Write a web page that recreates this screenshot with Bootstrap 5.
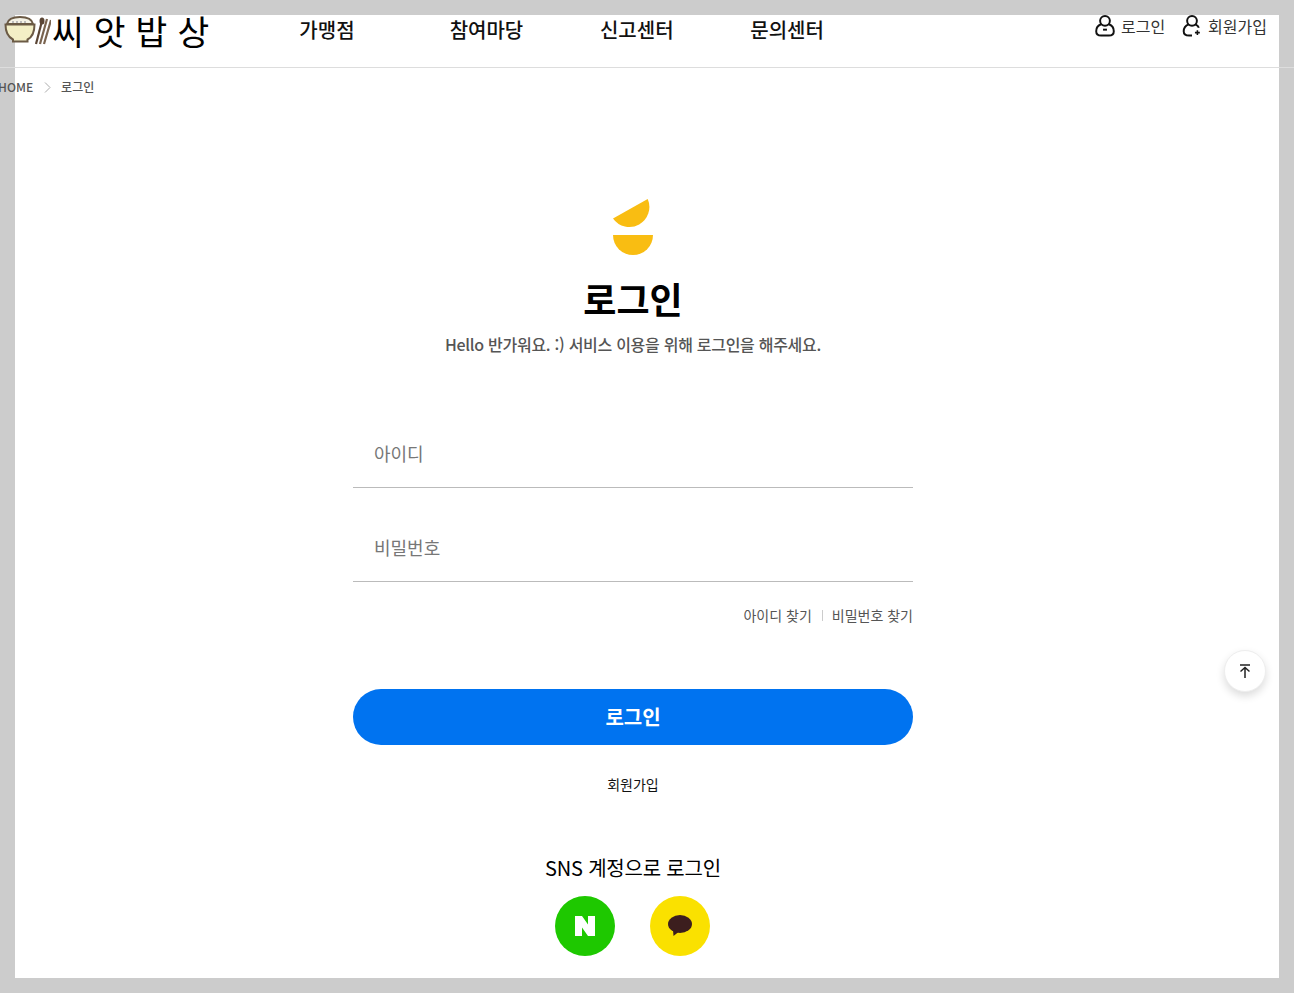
<!DOCTYPE html>
<html lang="ko">
<head>
<meta charset="utf-8">
<title>로그인</title>
<link href="https://cdn.jsdelivr.net/npm/bootstrap@5.3.0/dist/css/bootstrap.min.css" rel="stylesheet">
<style>
html,body{height:100%}
body{background:#ccc;font-family:"Noto Sans CJK KR","Noto Sans",sans-serif;overflow:hidden;color:#000}
.panel-sheet{margin:15px;height:963px;background:#fff;position:relative}
.site-head{margin:0 -15px;height:53px;border-bottom:1px solid #ddd;padding-left:4px;padding-right:27px}
.brand-name{font-size:34.500px;line-height:30px;letter-spacing:.2px;color:#000;text-decoration:none;white-space:nowrap;margin-left:1px;font-weight:400}
.brand-mark{width:47px;height:32px;flex:none}
.main-nav{margin-left:90px}
.main-nav a{display:block;width:150.300px;font-size:20px;font-weight:500;color:#111;text-decoration:none;line-height:30px;white-space:nowrap}
.user-link{font-size:16px;color:#333;text-decoration:none;line-height:22px;column-gap:5px}
.user-links{column-gap:17px}
.crumbs{margin:0 0 0 -16px;height:39px;font-size:12px;font-weight:500;color:#555;padding-bottom:1px}
.crumbs .sep{margin:0 10px 0 11px;color:#aaa}
.crumbs .home-txt{margin-left:-1px}
.login-zone{margin:0 13px 0 -15px;padding-top:92px;text-align:center}
.login-box{width:560px;margin:0 auto}
.login-title{font-size:36px;font-weight:700;line-height:52px;margin:16px 0 0;color:#000}
.login-sub{font-size:16px;font-weight:500;color:#555;line-height:24px;margin:8px 0 64px;letter-spacing:-.28px}
.line-input{display:block;width:100%;height:68px;border:0;border-bottom:1px solid #bbb;padding:0 21px 2px;font-size:18px;outline:0;margin-bottom:26px;background:transparent}
.line-input::placeholder{color:#777;opacity:1}
.find-links{font-size:14px;color:#555;line-height:20px;margin-top:-3px}
.find-links a{color:#555;text-decoration:none}
.find-links i{display:inline-block;width:1px;height:11px;background:#ccc;margin:0 9px 0 10px}
.btn-login{display:block;width:100%;height:56px;border-radius:28px;background:#0073f0;border:0;color:#fff;font-size:20px;font-weight:700;margin-top:64px}
.join-link{display:block;font-size:14px;line-height:20px;margin-top:29px;color:#111;text-decoration:none}
.sns-title{font-size:20px;line-height:30px;margin:59px 0 13px;color:#000;font-weight:400;letter-spacing:-.2px}
.sns-row{column-gap:35px;padding-right:2px}
.sns-round{width:60px;height:60px;border-radius:50%}
.sns-naver{background:#1ec800}
.sns-kakao{background:#fae100}
.to-top{position:absolute;left:1209px;top:635px;width:42px;height:42px;border-radius:50%;background:#fff;border:1px solid #eee;box-shadow:0 4px 8px rgba(0,0,0,.14);padding:0}
</style>
</head>
<body>
<div class="panel-sheet">
  <header class="site-head d-flex align-items-start">
    <svg class="brand-mark" viewBox="0 0 47 32" aria-hidden="true">
      <path d="M3 9C4 4 10 2 16 2s12 2 13 7z" fill="#f4f2e6" stroke="#6b5a45" stroke-width="2"/>
      <path d="M1.500 9.500h29c0 8-3 13-7 15v2H9v-2c-4-2-7.500-7-7.500-15z" fill="#f3efc6" stroke="#6b5a45" stroke-width="2"/>
      <path d="M8 7h14" stroke="#bbb" stroke-width="2" stroke-dasharray="2 2"/>
      <ellipse cx="38" cy="6" rx="2.500" ry="3.500" fill="#5b4636"/>
      <path d="M32 29L38 6" stroke="#5b4636" stroke-width="2.200" fill="none"/>
      <path d="M36 29L43 4M40 29L47 5" stroke="#7a6450" stroke-width="2.200" fill="none"/>
    </svg>
    <a class="brand-name" href="#">씨 앗 밥 상</a>
    <nav class="main-nav d-flex">
      <a href="#">가맹점</a><a href="#">참여마당</a><a href="#">신고센터</a><a href="#">문의센터</a>
    </nav>
    <div class="user-links d-flex ms-auto">
      <a class="user-link d-flex align-items-center" href="#">
        <svg width="22" height="22" viewBox="0 1 22 22.500" fill="none" stroke="#111" stroke-width="2"><circle cx="11" cy="7" r="5"/><path d="M7 10.500C3 12 2 15 2 17.500 2 20.500 4 22 7 22h8c3 0 5-1.500 5-4.500 0-2.500-1-5.500-5-7"/><path d="M9 16h4"/></svg>
        <span>로그인</span></a>
      <a class="user-link d-flex align-items-center" href="#">
        <svg width="21" height="22" viewBox="0 1 21 22.500" fill="none" stroke="#111" stroke-width="2"><circle cx="10" cy="7" r="5"/><path d="M6.500 10.500C3 12 1.500 15 1.500 17.500 1.500 20.500 3.500 22 7 22h3M13.500 10.500c2 1 3 2 3.500 3.500"/><path d="M15.500 16.500v5M13 19h5" stroke-width="1.600"/></svg>
        <span>회원가입</span></a>
    </div>
  </header>
  <div class="crumbs d-flex align-items-center">
    <span class="home-txt">HOME</span>
    <svg class="sep" width="7" height="11" viewBox="0 0 7 11" fill="none" stroke="#aaa" stroke-width="1"><path d="M1 .5l5 5-5 5"/></svg>
    <span>로그인</span>
  </div>
  <main class="login-zone">
    <div class="login-box">
      <svg width="40" height="57" viewBox="0 0 40 57" class="d-block mx-auto" aria-hidden="true">
        <path d="M0 19.500L34.700 0A20 20 0 0 1 0 19.500z" fill="#f9bd12"/>
        <path d="M0 36h40a20 20 0 0 1-40 0z" fill="#f9bd12"/>
      </svg>
      <h1 class="login-title">로그인</h1>
      <p class="login-sub">Hello 반가워요. :) 서비스 이용을 위해 로그인을 해주세요.</p>
      <form>
        <input class="line-input" type="text" placeholder="아이디">
        <input class="line-input" type="password" placeholder="비밀번호">
        <div class="find-links text-end"><a href="#">아이디 찾기</a><i></i><a href="#">비밀번호 찾기</a></div>
        <button class="btn-login" type="button">로그인</button>
      </form>
      <a class="join-link" href="#">회원가입</a>
      <h2 class="sns-title">SNS 계정으로 로그인</h2>
      <div class="sns-row d-flex justify-content-center">
        <a class="sns-round sns-naver d-flex align-items-center justify-content-center" href="#" aria-label="네이버">
          <svg width="20" height="20" viewBox="0 0 20 20"><path d="M0 0h7l6 8.500V0h7v20h-7L7 11.500V20H0z" fill="#fff"/></svg>
        </a>
        <a class="sns-round sns-kakao d-flex align-items-center justify-content-center" href="#" aria-label="카카오">
          <svg width="24" height="22" viewBox="0 0 24 22"><ellipse cx="12" cy="9" rx="12" ry="9" fill="#3c1e1e"/><path d="M5 15l.5 6 5-4z" fill="#3c1e1e"/></svg>
        </a>
      </div>
    </div>
  </main>
  <button class="to-top d-flex align-items-center justify-content-center" type="button" aria-label="맨 위로">
    <svg width="12" height="14" viewBox="0 0 12 14" fill="none" stroke="#222" stroke-width="1.500"><path d="M1 1h10M6 14V3.500M1.500 7.500L6 3.500l4.500 4"/></svg>
  </button>
</div>
<script src="https://cdn.jsdelivr.net/npm/bootstrap@5.3.0/dist/js/bootstrap.bundle.min.js"></script>
</body>
</html>
